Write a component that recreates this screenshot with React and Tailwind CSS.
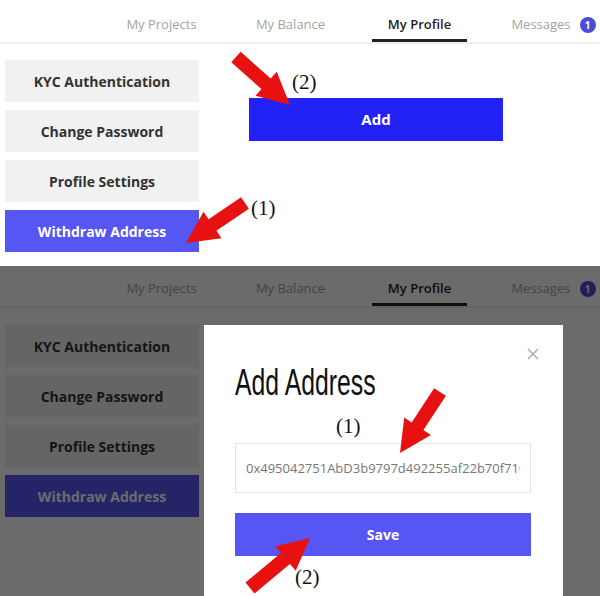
import React from 'react';

const tabs = ['My Projects', 'My Balance', 'My Profile', 'Messages'];
const menu = ['KYC Authentication', 'Change Password', 'Profile Settings', 'Withdraw Address'];

// red annotation arrows: [tailX, tailY, tipX, tipY]
const arrows = [
    [236, 57, 290, 105],
    [245, 203, 186, 243],
    [440, 392, 400, 453],
    [250, 588, 310, 538],
];

const arrowPoints = ([tx, ty, px, py]) => {
    const len = Math.hypot(px - tx, py - ty);
    const dx = (px - tx) / len;
    const dy = (py - ty) / len;
    const nx = -dy;
    const ny = dx;
    const head = 32;
    const W = 16;
    const w = 7;
    const ex = px - dx * head;
    const ey = py - dy * head;
    const pts = [
        [tx + nx * w, ty + ny * w],
        [ex + nx * w, ey + ny * w],
        [ex + nx * W, ey + ny * W],
        [px, py],
        [ex - nx * W, ey - ny * W],
        [ex - nx * w, ey - ny * w],
        [tx - nx * w, ty - ny * w],
    ];
    return pts.map(p => p.map(v => v.toFixed(1)).join(',')).join(' ');
};

const NavBar = ({ compact }) => (
    <div className={`flex pl-[97px] border-b-2 border-[#eeeeee] overflow-hidden ${compact ? 'h-[42px] pt-[6px]' : 'h-[44px] pt-[8px]'}`}>
        {tabs.map(tab => (
            <div key={tab} className={`w-[129px] shrink-0 flex justify-center ${tab === 'Messages' ? 'pl-[10px]' : ''}`}>
                {tab === 'My Profile' ? (
                    <span className="h-full flex items-center px-4 pt-[3px] border-b-[3px] border-[#222] text-[#1e1e1e] font-semibold text-[13px]">
                        {tab}
                    </span>
                ) : (
                    <span className="h-full flex items-center gap-[9px] text-[#a3a3a3] text-[13px]">
                        {tab}
                        {tab === 'Messages' && (
                            <span className="w-[16px] h-[16px] rounded-full bg-[#4b4bd8] text-white text-[10px] font-bold flex items-center justify-center">1</span>
                        )}
                    </span>
                )}
            </div>
        ))}
    </div>
);

const SideMenu = ({ className }) => (
    <div className={`w-[194px] ml-[5px] flex flex-col gap-2 ${className}`}>
        {menu.map(item => (
            <div
                key={item}
                className={`h-[42px] flex items-center justify-center font-bold text-[14px] ${item === 'Withdraw Address' ? 'bg-[#5656f2] text-white' : 'bg-[#f1f1f1] text-[#333]'}`}
            >
                {item}
            </div>
        ))}
    </div>
);

const Label = ({ text, className }) => (
    <span className={`absolute text-[21px] leading-none text-[#111] ${className}`} style={{ fontFamily: '"Liberation Serif", serif' }}>
        {text}
    </span>
);

export default function App() {
    return (
        <div className="relative w-[600px] h-[596px] overflow-hidden bg-white" style={{ fontFamily: '"Open Sans", sans-serif' }}>
            {/* --- first shot: page --- */}
            <div className="h-[266px] overflow-hidden">
                <NavBar />
                <div className="flex">
                    <SideMenu className="mt-[16px]" />
                    <button className="ml-[50px] mt-[54px] w-[254px] h-[43px] bg-[#2222f6] text-white font-bold text-[15px]">
                        Add
                    </button>
                </div>
            </div>

            {/* --- second shot: modal open --- */}
            <div className="relative h-[330px] overflow-hidden">
                <NavBar compact />
                <SideMenu className="mt-[17px]" />
                <div className="absolute inset-0 bg-black/[0.58]" />

                <div className="absolute left-[204px] top-[59px] w-[359px] h-[300px] bg-white">
                    <svg className="absolute left-[323px] top-[23px]" width="12" height="12" viewBox="0 0 12 12">
                        <path d="M1 1 L11 11 M11 1 L1 11" stroke="#a8a8a8" strokeWidth="1.4" fill="none" />
                    </svg>
                    <div className="ml-[31px] mt-[40px] h-[36px]">
                        <h2
                            className="inline-block origin-left [transform:scaleX(0.67)] text-[37px] leading-[36px] text-[#111] font-normal whitespace-nowrap"
                            style={{ fontFamily: '"Liberation Sans", sans-serif' }}
                        >
                            Add Address
                        </h2>
                    </div>
                    <input
                        readOnly
                        value="0x495042751AbD3b9797d492255af22b70f710c4e3"
                        className="block ml-[31px] mt-[42px] w-[296px] h-[50px] border border-[#e6e6e6] px-[10px] text-[13px] text-[#777] outline-none"
                    />
                    <button className="block ml-[31px] mt-[20px] w-[296px] h-[43px] bg-[#5656f2] text-white font-bold text-[14px]">
                        Save
                    </button>
                </div>
            </div>

            {/* --- annotations --- */}
            <svg className="absolute inset-0 pointer-events-none" width="600" height="596" viewBox="0 0 600 596">
                {arrows.map((a, i) => (
                    <polygon key={i} points={arrowPoints(a)} fill="#e81111" />
                ))}
            </svg>
            <Label text="(2)" className="left-[292px] top-[72px]" />
            <Label text="(1)" className="left-[251px] top-[198px]" />
            <Label text="(1)" className="left-[336px] top-[416px]" />
            <Label text="(2)" className="left-[295px] top-[567px]" />
        </div>
    );
}
